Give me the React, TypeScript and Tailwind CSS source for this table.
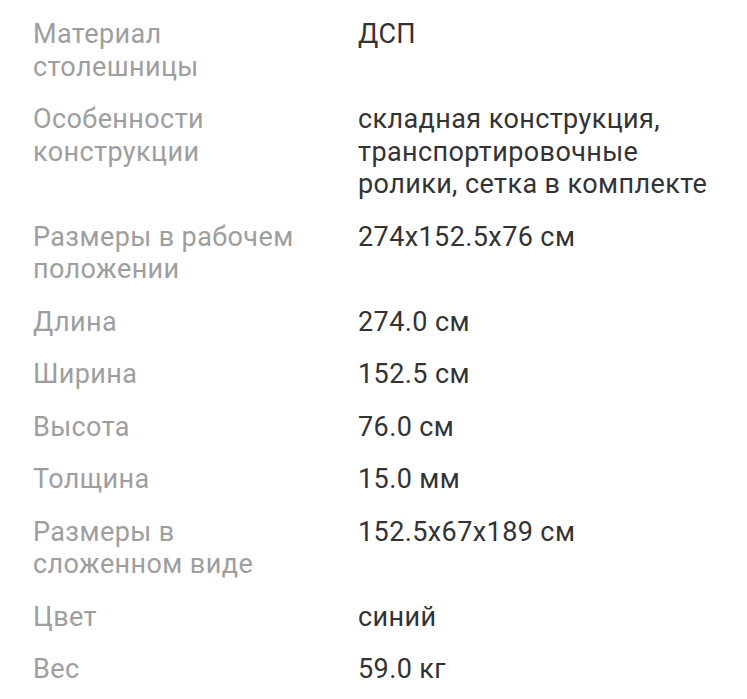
import React from "react";

const rows: [string, string][] = [
  ["Материал\nстолешницы", "ДСП"],
  ["Особенности\nконструкции", "складная конструкция,\nтранспортировочные\nролики, сетка в комплекте"],
  ["Размеры в рабочем\nположении", "274x152.5x76 см"],
  ["Длина", "274.0 см"],
  ["Ширина", "152.5 см"],
  ["Высота", "76.0 см"],
  ["Толщина", "15.0 мм"],
  ["Размеры в\nсложенном виде", "152.5x67x189 см"],
  ["Цвет", "синий"],
  ["Вес", "59.0 кг"],
];

export default function App() {
  return (
    <div
      className="w-[747px] h-[699px] overflow-hidden bg-white pt-[18px] pl-[33px]"
      style={{ fontFamily: "Roboto, sans-serif" }}
    >
      <div className="flex flex-col gap-[20px]">
        {rows.map(([l, v], i) => (
          <div key={i} className="flex text-[27px] leading-[32.5px] tracking-[0.4px]">
            <div className="w-[325px] shrink-0 text-[#9e9e9e] whitespace-pre-line">{l}</div>
            <div className="text-[#333333] whitespace-pre-line">{v}</div>
          </div>
        ))}
      </div>
    </div>
  );
}
